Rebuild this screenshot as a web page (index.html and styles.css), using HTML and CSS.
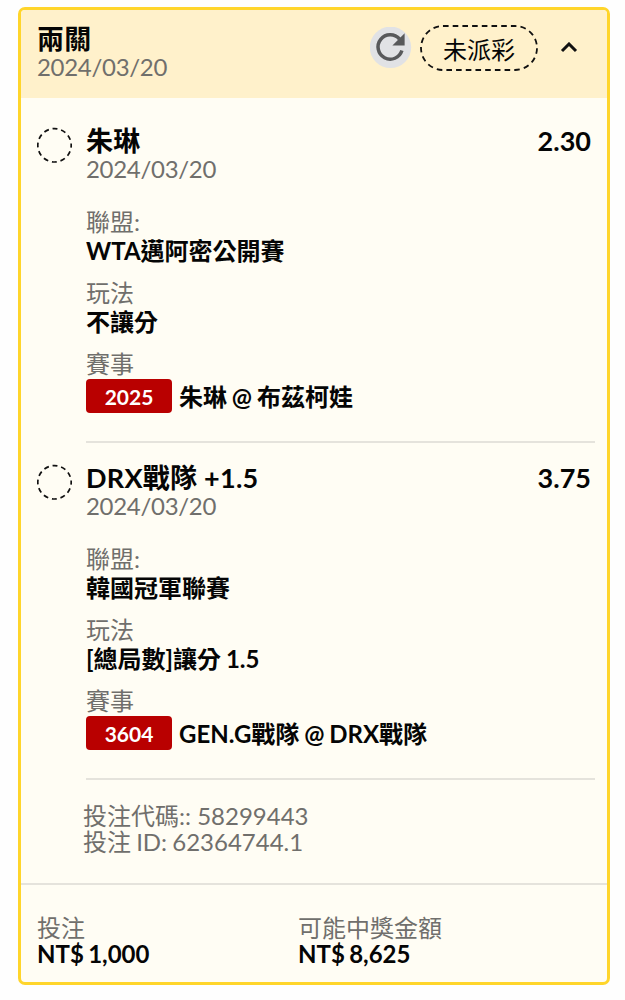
FILE: index.html
```
<!DOCTYPE html>
<html lang="zh-Hant">
<head>
<meta charset="utf-8">
<title>投注</title>
<link rel="stylesheet" href="styles.css">
</head>
<body>
<article class="slip">
  <header class="slip-header">
    <div>
      <h1 class="title">兩關</h1>
      <div class="muted date">2024/03/20</div>
    </div>
    <div class="actions">
      <svg class="refresh" viewBox="0 0 42 42">
        <circle cx="20.5" cy="20.3" r="20.7" fill="#e1e2e5"/>
        <path d="M31.9 23.6A12.2 12.2 0 1 1 29.5 12" fill="none" stroke="#58595b" stroke-width="3.5"/>
        <path d="M34.6 6.2V18.4H22.4Z" fill="#58595b"/>
      </svg>
      <div class="status">
        <svg class="status-outline" viewBox="0 0 118 46"><rect x="1" y="1" width="116" height="44" rx="22" fill="none" stroke="#111" stroke-width="1.8" stroke-dasharray="5.6 4.1"/></svg>
        <span>未派彩</span>
      </div>
      <svg class="chevron" viewBox="0 0 18 12"><path d="M2 9L9 2L16 9" fill="none" stroke="#111" stroke-width="3"/></svg>
    </div>
  </header>

  <section class="leg">
    <svg class="marker" viewBox="0 0 36 36"><circle cx="17.5" cy="18.3" r="16.7" fill="none" stroke="#111" stroke-width="1.7" stroke-dasharray="5 3.743" stroke-dashoffset="2.5"/></svg>
    <div class="leg-body">
      <div class="leg-top"><h2 class="title">朱琳</h2><span class="title odds">2.30</span></div>
      <div class="muted date">2024/03/20</div>
      <dl class="details">
        <div><dt class="muted">聯盟:</dt><dd>WTA邁阿密公開賽</dd></div>
        <div><dt class="muted">玩法</dt><dd>不讓分</dd></div>
        <div><dt class="muted">賽事</dt><dd class="match"><span class="badge">2025</span><span>朱琳 @ 布茲柯娃</span></dd></div>
      </dl>
    </div>
  </section>

  <section class="leg">
    <svg class="marker" viewBox="0 0 36 36"><circle cx="17.5" cy="18.3" r="16.7" fill="none" stroke="#111" stroke-width="1.7" stroke-dasharray="5 3.743" stroke-dashoffset="2.5"/></svg>
    <div class="leg-body">
      <div class="leg-top"><h2 class="title">DRX戰隊 +1.5</h2><span class="title odds">3.75</span></div>
      <div class="muted date">2024/03/20</div>
      <dl class="details">
        <div><dt class="muted">聯盟:</dt><dd>韓國冠軍聯賽</dd></div>
        <div><dt class="muted">玩法</dt><dd>[總局數]讓分 1.5</dd></div>
        <div><dt class="muted">賽事</dt><dd class="match"><span class="badge">3604</span><span>GEN.G戰隊 @ DRX戰隊</span></dd></div>
      </dl>
    </div>
  </section>

  <div class="codes muted">
    <div>投注代碼:: 58299443</div>
    <div class="bet-id">投注 ID: 62364744.1</div>
  </div>

  <footer class="totals">
    <div><div class="muted">投注</div><div class="amount">NT$ 1,000</div></div>
    <div><div class="muted">可能中獎金額</div><div class="amount">NT$ 8,625</div></div>
  </footer>
</article>
</body>
</html>
```
FILE: styles.css
```
* { box-sizing: border-box; }
body {
  margin: 0;
  padding: 7px 15px 0 18px;
  background: #fefefe;
  color: #050505;
  font: 24px/29px Lato, "Noto Sans CJK TC", sans-serif;
}
h1, h2, dl, dd { margin: 0; }
.slip {
  height: 978px;
  border: 3px solid #ffd52b;
  border-radius: 7px;
  background: #fffdf4;
  overflow: hidden;
}
.slip-header {
  display: flex;
  justify-content: space-between;
  height: 88px;
  padding: 15px 29px 0 16px;
  background: #fff1cb;
}
.title {
  font-size: 27px;
  line-height: 27px;
  font-weight: 700;
  letter-spacing: 0.25px;
  white-space: nowrap;
}
.odds { letter-spacing: 0; }
.muted { color: #706f6c; font-weight: 400; }
.date { letter-spacing: -0.3px; }
.actions { display: flex; align-items: center; height: 46px; }
.refresh { width: 42px; height: 42px; margin-right: 8px; }
.status {
  position: relative;
  display: flex;
  align-items: center;
  justify-content: center;
  width: 118px;
  height: 46px;
  margin-right: 22px;
  padding-top: 2px;
}
.status-outline { position: absolute; inset: 0; width: 118px; height: 46px; }
.chevron { width: 18px; height: 12px; }
.leg {
  display: flex;
  gap: 13px;
  padding: 0 12px 0 16px;
}
.leg:first-of-type { padding-top: 29px; }
.leg + .leg { padding-top: 21px; }
.marker { flex: none; width: 36px; height: 36px; }
.leg-body {
  flex: 1;
  height: 316px;
  border-bottom: 2px solid #e5e3dc;
}
.leg-top { display: flex; justify-content: space-between; padding-right: 4px; }
.details { display: grid; gap: 13px; padding-top: 24px; }
dd { font-weight: 700; white-space: nowrap; word-spacing: -1px; }
.match { display: flex; align-items: center; gap: 7px; padding-top: 1px; }
.badge {
  width: 86px;
  height: 34px;
  border-radius: 4px;
  background: #b90000;
  color: #fff;
  font-size: 21px;
  line-height: 35px;
  text-align: center;
}
.codes {
  height: 105px;
  padding: 23px 0 0 62px;
  line-height: 26px;
  border-bottom: 2px solid #e5e3dc;
}
.bet-id { word-spacing: -1px; }
.totals {
  display: grid;
  grid-template-columns: 261px 1fr;
  padding: 30px 0 0 16px;
  line-height: 26px;
}
.amount { font-weight: 700; word-spacing: -1.5px; }
```
